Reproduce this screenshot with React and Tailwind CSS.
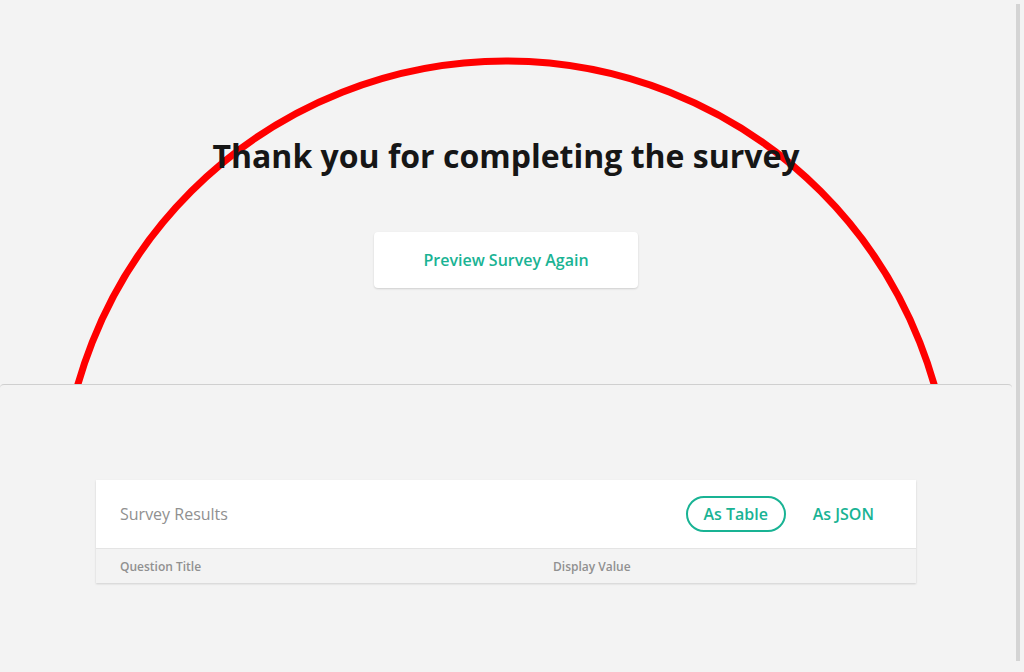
import React, { useState } from 'react'

const font = { fontFamily: '"Open Sans", "Noto Sans", sans-serif' }

const ResultsCard = () => {
  const [mode, setMode] = useState('table')

  return (
    <div className="w-[820px] shadow-[0_1px_2px_rgba(0,0,0,0.15)]">
      <div className="flex h-[68px] items-center justify-between bg-white pl-6 pr-[42px]">
        <span className="text-[16px] text-[#909090]">Survey Results</span>
        <div className="flex items-center gap-[27px]">
          <button
            onClick={() => setMode('table')}
            className={`h-9 w-[100px] rounded-full border-2 text-[16px] font-semibold text-[#19b394] ${
              mode === 'table' ? 'border-[#19b394]' : 'border-transparent'
            }`}
          >
            As Table
          </button>
          <button
            onClick={() => setMode('json')}
            className={`h-9 rounded-full text-[16px] font-semibold text-[#19b394] ${
              mode === 'json' ? 'underline' : ''
            }`}
          >
            As JSON
          </button>
        </div>
      </div>
      <div className="flex h-[35px] items-center border-t border-[#e4e4e4] bg-[#f3f3f3] pl-6 pt-[2px] text-[12px] font-semibold text-[#909090]">
        <span className="w-[433px]">Question Title</span>
        <span>Display Value</span>
      </div>
    </div>
  )
}

export default function App() {
  return (
    <div className="relative h-[672px] w-[1024px] overflow-hidden bg-[#f3f3f3]" style={font}>
      <div className="w-[1012px]">
        {/* completed page */}
        <div className="relative h-[384px]">
          <svg className="absolute left-0 top-0" width="1012" height="384" viewBox="0 0 1012 384">
            <circle cx="506" cy="506" r="445" fill="none" stroke="#ff0000" strokeWidth="7" />
          </svg>
          <div className="relative flex flex-col items-center pt-[136px]">
            <h1 className="text-[32px] font-bold leading-[40px] text-[#161616]">
              Thank you for completing the survey
            </h1>
            <button className="mt-[56px] h-14 w-[264px] rounded bg-white text-[16px] font-semibold text-[#19b394] shadow-[0_1px_2px_rgba(0,0,0,0.15)]">
              Preview Survey Again
            </button>
          </div>
        </div>

        {/* results panel */}
        <div className="flex h-[288px] items-start justify-center rounded-t border-t border-[#cfcfcf] pt-[95px]">
          <ResultsCard />
        </div>
      </div>

      {/* scrollbar thumb */}
      <div className="absolute left-[1016px] top-[4px] h-[657px] w-1 bg-[#d4d4d4]" />
    </div>
  )
}
